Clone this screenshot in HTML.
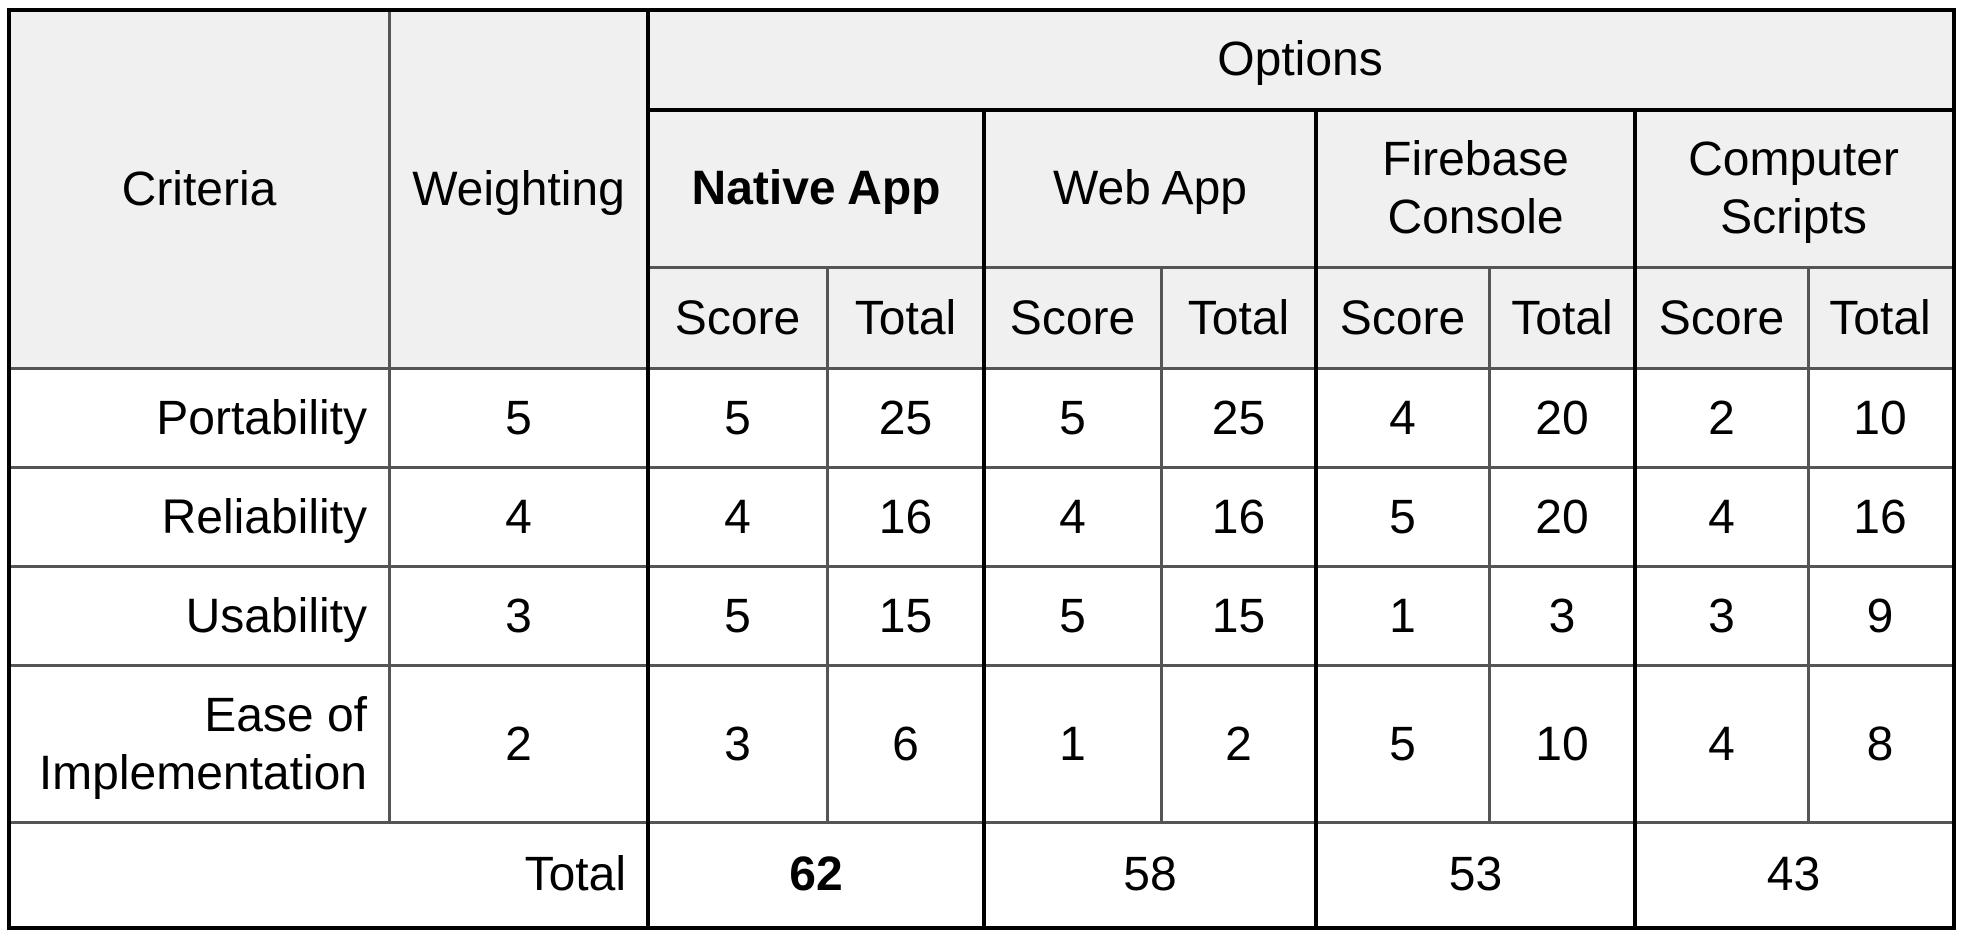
<!DOCTYPE html>
<html><head><meta charset="utf-8"><style>
body{margin:0;width:1962px;height:934px;background:#fff;position:relative;overflow:hidden;font-family:"Liberation Sans",Arial,sans-serif;font-size:48px;color:#000}
.c{position:absolute;display:flex;align-items:center;justify-content:center;text-align:center;line-height:1.2}
.r{justify-content:flex-end;text-align:right;padding-right:22px;box-sizing:border-box}
.l{position:absolute}
.g{background:#555}.k{background:#000}
</style></head><body>
<div style="position:absolute;left:9px;top:10px;width:1943px;height:359px;background:#f0f0f0"></div>

<div class="l k" style="left:648px;top:108px;width:1304px;height:4px"></div>
<div class="l g" style="left:648px;top:266px;width:1304px;height:3px"></div>
<div class="l g" style="left:9px;top:367px;width:1943px;height:3px"></div>
<div class="l g" style="left:9px;top:466px;width:1943px;height:3px"></div>
<div class="l g" style="left:9px;top:565px;width:1943px;height:3px"></div>
<div class="l g" style="left:9px;top:664px;width:1943px;height:3px"></div>
<div class="l g" style="left:9px;top:821px;width:1943px;height:3px"></div>
<div class="l g" style="left:388px;top:10px;width:3px;height:813px"></div>
<div class="l g" style="left:826px;top:268px;width:3px;height:555px"></div>
<div class="l g" style="left:1160px;top:268px;width:3px;height:555px"></div>
<div class="l g" style="left:1488px;top:268px;width:3px;height:555px"></div>
<div class="l g" style="left:1807px;top:268px;width:3px;height:555px"></div>
<div class="l k" style="left:646px;top:10px;width:4px;height:916px"></div>
<div class="l k" style="left:982px;top:110px;width:4px;height:816px"></div>
<div class="l k" style="left:1314px;top:110px;width:4px;height:816px"></div>
<div class="l k" style="left:1633px;top:110px;width:4px;height:816px"></div>
<div class="l" style="left:7px;top:8px;border:4px solid #000;width:1941px;height:914px"></div>

<div class="c" style="left:9px;top:10px;width:380px;height:359px">Criteria</div>
<div class="c" style="left:389px;top:10px;width:259px;height:359px">Weighting</div>
<div class="c" style="left:648px;top:10px;width:1304px;height:100px">Options</div>
<div class="c" style="left:648px;top:110px;width:336px;height:158px;font-weight:bold">Native App</div>
<div class="c" style="left:984px;top:110px;width:332px;height:158px">Web App</div>
<div class="c" style="left:1316px;top:110px;width:319px;height:158px">Firebase<br>Console</div>
<div class="c" style="left:1635px;top:110px;width:317px;height:158px">Computer<br>Scripts</div>

<div class="c" style="left:648px;top:268px;width:179px;height:101px">Score</div>
<div class="c" style="left:827px;top:268px;width:157px;height:101px">Total</div>
<div class="c" style="left:984px;top:268px;width:177px;height:101px">Score</div>
<div class="c" style="left:1161px;top:268px;width:155px;height:101px">Total</div>
<div class="c" style="left:1316px;top:268px;width:173px;height:101px">Score</div>
<div class="c" style="left:1489px;top:268px;width:146px;height:101px">Total</div>
<div class="c" style="left:1635px;top:268px;width:173px;height:101px">Score</div>
<div class="c" style="left:1808px;top:268px;width:144px;height:101px">Total</div>

<div class="c r" style="left:9px;top:369px;width:380px;height:99px">Portability</div>
<div class="c r" style="left:9px;top:468px;width:380px;height:99px">Reliability</div>
<div class="c r" style="left:9px;top:567px;width:380px;height:99px">Usability</div>
<div class="c r" style="left:9px;top:666px;width:380px;height:157px">Ease of<br>Implementation</div>

<div class="c" style="left:389px;top:369px;width:259px;height:99px">5</div>
<div class="c" style="left:389px;top:468px;width:259px;height:99px">4</div>
<div class="c" style="left:389px;top:567px;width:259px;height:99px">3</div>
<div class="c" style="left:389px;top:666px;width:259px;height:157px">2</div>

<div class="c" style="left:648px;top:369px;width:179px;height:99px">5</div>
<div class="c" style="left:827px;top:369px;width:157px;height:99px">25</div>
<div class="c" style="left:984px;top:369px;width:177px;height:99px">5</div>
<div class="c" style="left:1161px;top:369px;width:155px;height:99px">25</div>
<div class="c" style="left:1316px;top:369px;width:173px;height:99px">4</div>
<div class="c" style="left:1489px;top:369px;width:146px;height:99px">20</div>
<div class="c" style="left:1635px;top:369px;width:173px;height:99px">2</div>
<div class="c" style="left:1808px;top:369px;width:144px;height:99px">10</div>

<div class="c" style="left:648px;top:468px;width:179px;height:99px">4</div>
<div class="c" style="left:827px;top:468px;width:157px;height:99px">16</div>
<div class="c" style="left:984px;top:468px;width:177px;height:99px">4</div>
<div class="c" style="left:1161px;top:468px;width:155px;height:99px">16</div>
<div class="c" style="left:1316px;top:468px;width:173px;height:99px">5</div>
<div class="c" style="left:1489px;top:468px;width:146px;height:99px">20</div>
<div class="c" style="left:1635px;top:468px;width:173px;height:99px">4</div>
<div class="c" style="left:1808px;top:468px;width:144px;height:99px">16</div>

<div class="c" style="left:648px;top:567px;width:179px;height:99px">5</div>
<div class="c" style="left:827px;top:567px;width:157px;height:99px">15</div>
<div class="c" style="left:984px;top:567px;width:177px;height:99px">5</div>
<div class="c" style="left:1161px;top:567px;width:155px;height:99px">15</div>
<div class="c" style="left:1316px;top:567px;width:173px;height:99px">1</div>
<div class="c" style="left:1489px;top:567px;width:146px;height:99px">3</div>
<div class="c" style="left:1635px;top:567px;width:173px;height:99px">3</div>
<div class="c" style="left:1808px;top:567px;width:144px;height:99px">9</div>

<div class="c" style="left:648px;top:666px;width:179px;height:157px">3</div>
<div class="c" style="left:827px;top:666px;width:157px;height:157px">6</div>
<div class="c" style="left:984px;top:666px;width:177px;height:157px">1</div>
<div class="c" style="left:1161px;top:666px;width:155px;height:157px">2</div>
<div class="c" style="left:1316px;top:666px;width:173px;height:157px">5</div>
<div class="c" style="left:1489px;top:666px;width:146px;height:157px">10</div>
<div class="c" style="left:1635px;top:666px;width:173px;height:157px">4</div>
<div class="c" style="left:1808px;top:666px;width:144px;height:157px">8</div>

<div class="c r" style="left:9px;top:823px;width:639px;height:103px">Total</div>
<div class="c" style="left:648px;top:823px;width:336px;height:103px;font-weight:bold">62</div>
<div class="c" style="left:984px;top:823px;width:332px;height:103px">58</div>
<div class="c" style="left:1316px;top:823px;width:319px;height:103px">53</div>
<div class="c" style="left:1635px;top:823px;width:317px;height:103px">43</div>
</body></html>
